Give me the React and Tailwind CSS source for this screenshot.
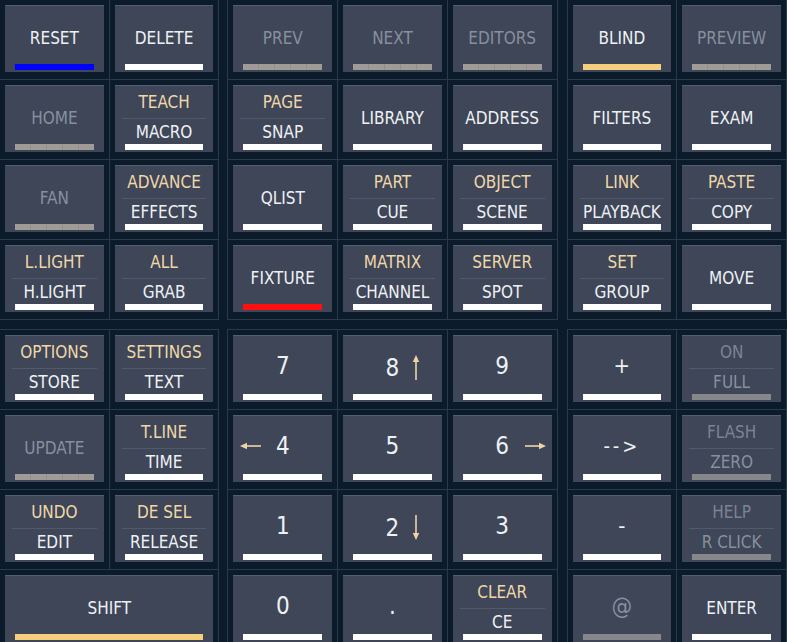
const BARS = {
  white: 'bg-white',
  blue: 'bg-[#0000ff]',
  red: 'bg-[#ff1010]',
  gold: 'bg-[#f5cf7b]',
  dim: 'bg-[repeating-linear-gradient(90deg,#a09b96_0px,#a09b96_15px,#948f8b_15px,#948f8b_16px)]',
  gray: 'bg-[#85878b]',
};

const WHITE = 'text-[#eef1f4]';
const BEIGE = 'text-[#f0d7a8]';
const DIM = 'text-[#87909e]';
const DIM_UP = 'text-[#7b8492]';

const Bar = ({kind}) => <div className={`mx-[10px] mb-[2px] h-[6px] shrink-0 ${BARS[kind]}`} />;

const Key = ({label, upper, bar = 'white', dim, span, children, pt = 'pt-[7px]'}) => {
  return (
    <div className={`h-[79px] bg-[#0b1b29] px-[5px] pt-[5px] pb-[7px] ${span ? 'col-span-2' : ''}`}>
      <div className="flex h-[67px] flex-col bg-[#3e4658] shadow-[inset_0_1px_0_#535d72]">
        {upper ? (
          <>
            <div className={`flex h-[33px] items-center justify-center pt-[1px] text-[17px] leading-none ${dim ? DIM_UP : BEIGE}`}>
              {upper}
            </div>
            <div className="mx-[7px] h-px shrink-0 bg-[#505a6d]" />
            <div className={`flex flex-1 items-center justify-center pt-[1px] text-[17px] leading-none ${dim ? DIM : WHITE}`}>
              {label}
            </div>
          </>
        ) : (
          <div className={`flex flex-1 items-center justify-center ${pt} text-[17px] leading-none ${dim ? DIM : WHITE}`}>
            {children ?? label}
          </div>
        )}
        <Bar kind={bar} />
      </div>
    </div>
  );
};

const ArrowUp = () => (
  <svg width="8" height="25" viewBox="0 0 8 25" className="block">
    <path d="M4 3 L4 25" stroke="#eed4a6" strokeWidth="1.6" />
    <path d="M0.8 7 L4 0 L7.2 7 Z" fill="#eed4a6" />
  </svg>
);

const ArrowDown = () => (
  <svg width="8" height="25" viewBox="0 0 8 25" className="block">
    <path d="M4 0 L4 22" stroke="#eed4a6" strokeWidth="1.6" />
    <path d="M0.8 18 L4 25 L7.2 18 Z" fill="#eed4a6" />
  </svg>
);

const ArrowLeft = () => (
  <svg width="21" height="8" viewBox="0 0 21 8" className="block">
    <path d="M3 4 L21 4" stroke="#eed4a6" strokeWidth="1.6" />
    <path d="M7 0.8 L0 4 L7 7.2 Z" fill="#eed4a6" />
  </svg>
);

const ArrowRight = () => (
  <svg width="21" height="8" viewBox="0 0 21 8" className="block">
    <path d="M0 4 L18 4" stroke="#eed4a6" strokeWidth="1.6" />
    <path d="M14 0.8 L21 4 L14 7.2 Z" fill="#eed4a6" />
  </svg>
);

// number centred on the key, optional arrow to its left or right
const Digit = ({n, left, right, side}) => (
  <div className="grid w-full grid-cols-[1fr_auto_1fr] items-center">
    <div className="flex justify-start pl-[7px]">{left}</div>
    <span className="text-[24px] leading-none text-[#eef1f4]">{n}</span>
    <div className={`flex ${side ? 'justify-end pr-[6px]' : 'justify-start pl-[13px]'}`}>{right}</div>
  </div>
);

const Section = ({cols, width, className = '', children}) => (
  <div className={`grid gap-px bg-[#293b4b] p-px ${cols} ${width} ${className}`}>{children}</div>
);

export default function App() {
  return (
    <div className="h-[642px] w-[787px] overflow-hidden bg-[#0b1b29] font-['Liberation_Sans_Narrow','DejaVu_Sans_Condensed','Liberation_Sans',sans-serif]">
      <div className="-ml-px -mt-px flex flex-col gap-[9px]">
        {/* upper block */}
        <div className="flex">
          <Section cols="grid-cols-2" width="w-[221px]">
            <Key label="RESET" bar="blue" />
            <Key label="DELETE" />
            <Key label="HOME" dim bar="dim" />
            <Key upper="TEACH" label="MACRO" />
            <Key label="FAN" dim bar="dim" />
            <Key upper="ADVANCE" label="EFFECTS" />
            <Key upper="L.LIGHT" label="H.LIGHT" />
            <Key upper="ALL" label="GRAB" />
          </Section>
          <Section cols="grid-cols-3" width="w-[331px]" className="ml-[8px]">
            <Key label="PREV" dim bar="dim" />
            <Key label="NEXT" dim bar="dim" />
            <Key label="EDITORS" dim bar="dim" />
            <Key upper="PAGE" label="SNAP" />
            <Key label="LIBRARY" />
            <Key label="ADDRESS" />
            <Key label="QLIST" />
            <Key upper="PART" label="CUE" />
            <Key upper="OBJECT" label="SCENE" />
            <Key label="FIXTURE" bar="red" />
            <Key upper="MATRIX" label="CHANNEL" />
            <Key upper="SERVER" label="SPOT" />
          </Section>
          <Section cols="grid-cols-2" width="w-[221px]" className="ml-[9px]">
            <Key label="BLIND" bar="gold" />
            <Key label="PREVIEW" dim bar="dim" />
            <Key label="FILTERS" />
            <Key label="EXAM" />
            <Key upper="LINK" label="PLAYBACK" />
            <Key upper="PASTE" label="COPY" />
            <Key upper="SET" label="GROUP" />
            <Key label="MOVE" />
          </Section>
        </div>

        {/* lower block */}
        <div className="flex">
          <Section cols="grid-cols-2" width="w-[221px]">
            <Key upper="OPTIONS" label="STORE" />
            <Key upper="SETTINGS" label="TEXT" />
            <Key label="UPDATE" dim bar="dim" />
            <Key upper="T.LINE" label="TIME" />
            <Key upper="UNDO" label="EDIT" />
            <Key upper="DE SEL" label="RELEASE" />
            <Key label="SHIFT" bar="gold" span />
          </Section>
          <Section cols="grid-cols-3" width="w-[331px]" className="ml-[8px]">
            <Key pt="pt-[2px]"><Digit n="7" /></Key>
            <Key pt="pt-[6px]"><Digit n="8" right={<ArrowUp />} /></Key>
            <Key pt="pt-[2px]"><Digit n="9" /></Key>
            <Key pt="pt-[2px]"><Digit n="4" left={<ArrowLeft />} /></Key>
            <Key pt="pt-[2px]"><Digit n="5" /></Key>
            <Key pt="pt-[2px]"><Digit n="6" side right={<ArrowRight />} /></Key>
            <Key pt="pt-[2px]"><Digit n="1" /></Key>
            <Key pt="pt-[6px]"><Digit n="2" right={<ArrowDown />} /></Key>
            <Key pt="pt-[2px]"><Digit n="3" /></Key>
            <Key pt="pt-[2px]"><Digit n="0" /></Key>
            <Key pt="pt-[2px]"><span className="text-[24px] leading-none text-[#eef1f4]">.</span></Key>
            <Key upper="CLEAR" label="CE" />
          </Section>
          <Section cols="grid-cols-2" width="w-[221px]" className="ml-[9px]">
            <Key pt="pt-[2px]"><span className="text-[22px] leading-none text-[#eef1f4]">+</span></Key>
            <Key upper="ON" label="FULL" dim bar="gray" />
            <Key pt="pt-[3px]"><span className="text-[20px] leading-none tracking-[3px] text-[#eef1f4]">--&gt;</span></Key>
            <Key upper="FLASH" label="ZERO" dim bar="gray" />
            <Key pt="pt-[3px]"><span className="text-[22px] leading-none text-[#eef1f4]">-</span></Key>
            <Key upper="HELP" label="R CLICK" dim bar="gray" />
            <Key pt="pt-[4px]" bar="gray"><span className="text-[23px] leading-none text-[#87909e]">@</span></Key>
            <Key label="ENTER" />
          </Section>
        </div>
      </div>
    </div>
  );
}
